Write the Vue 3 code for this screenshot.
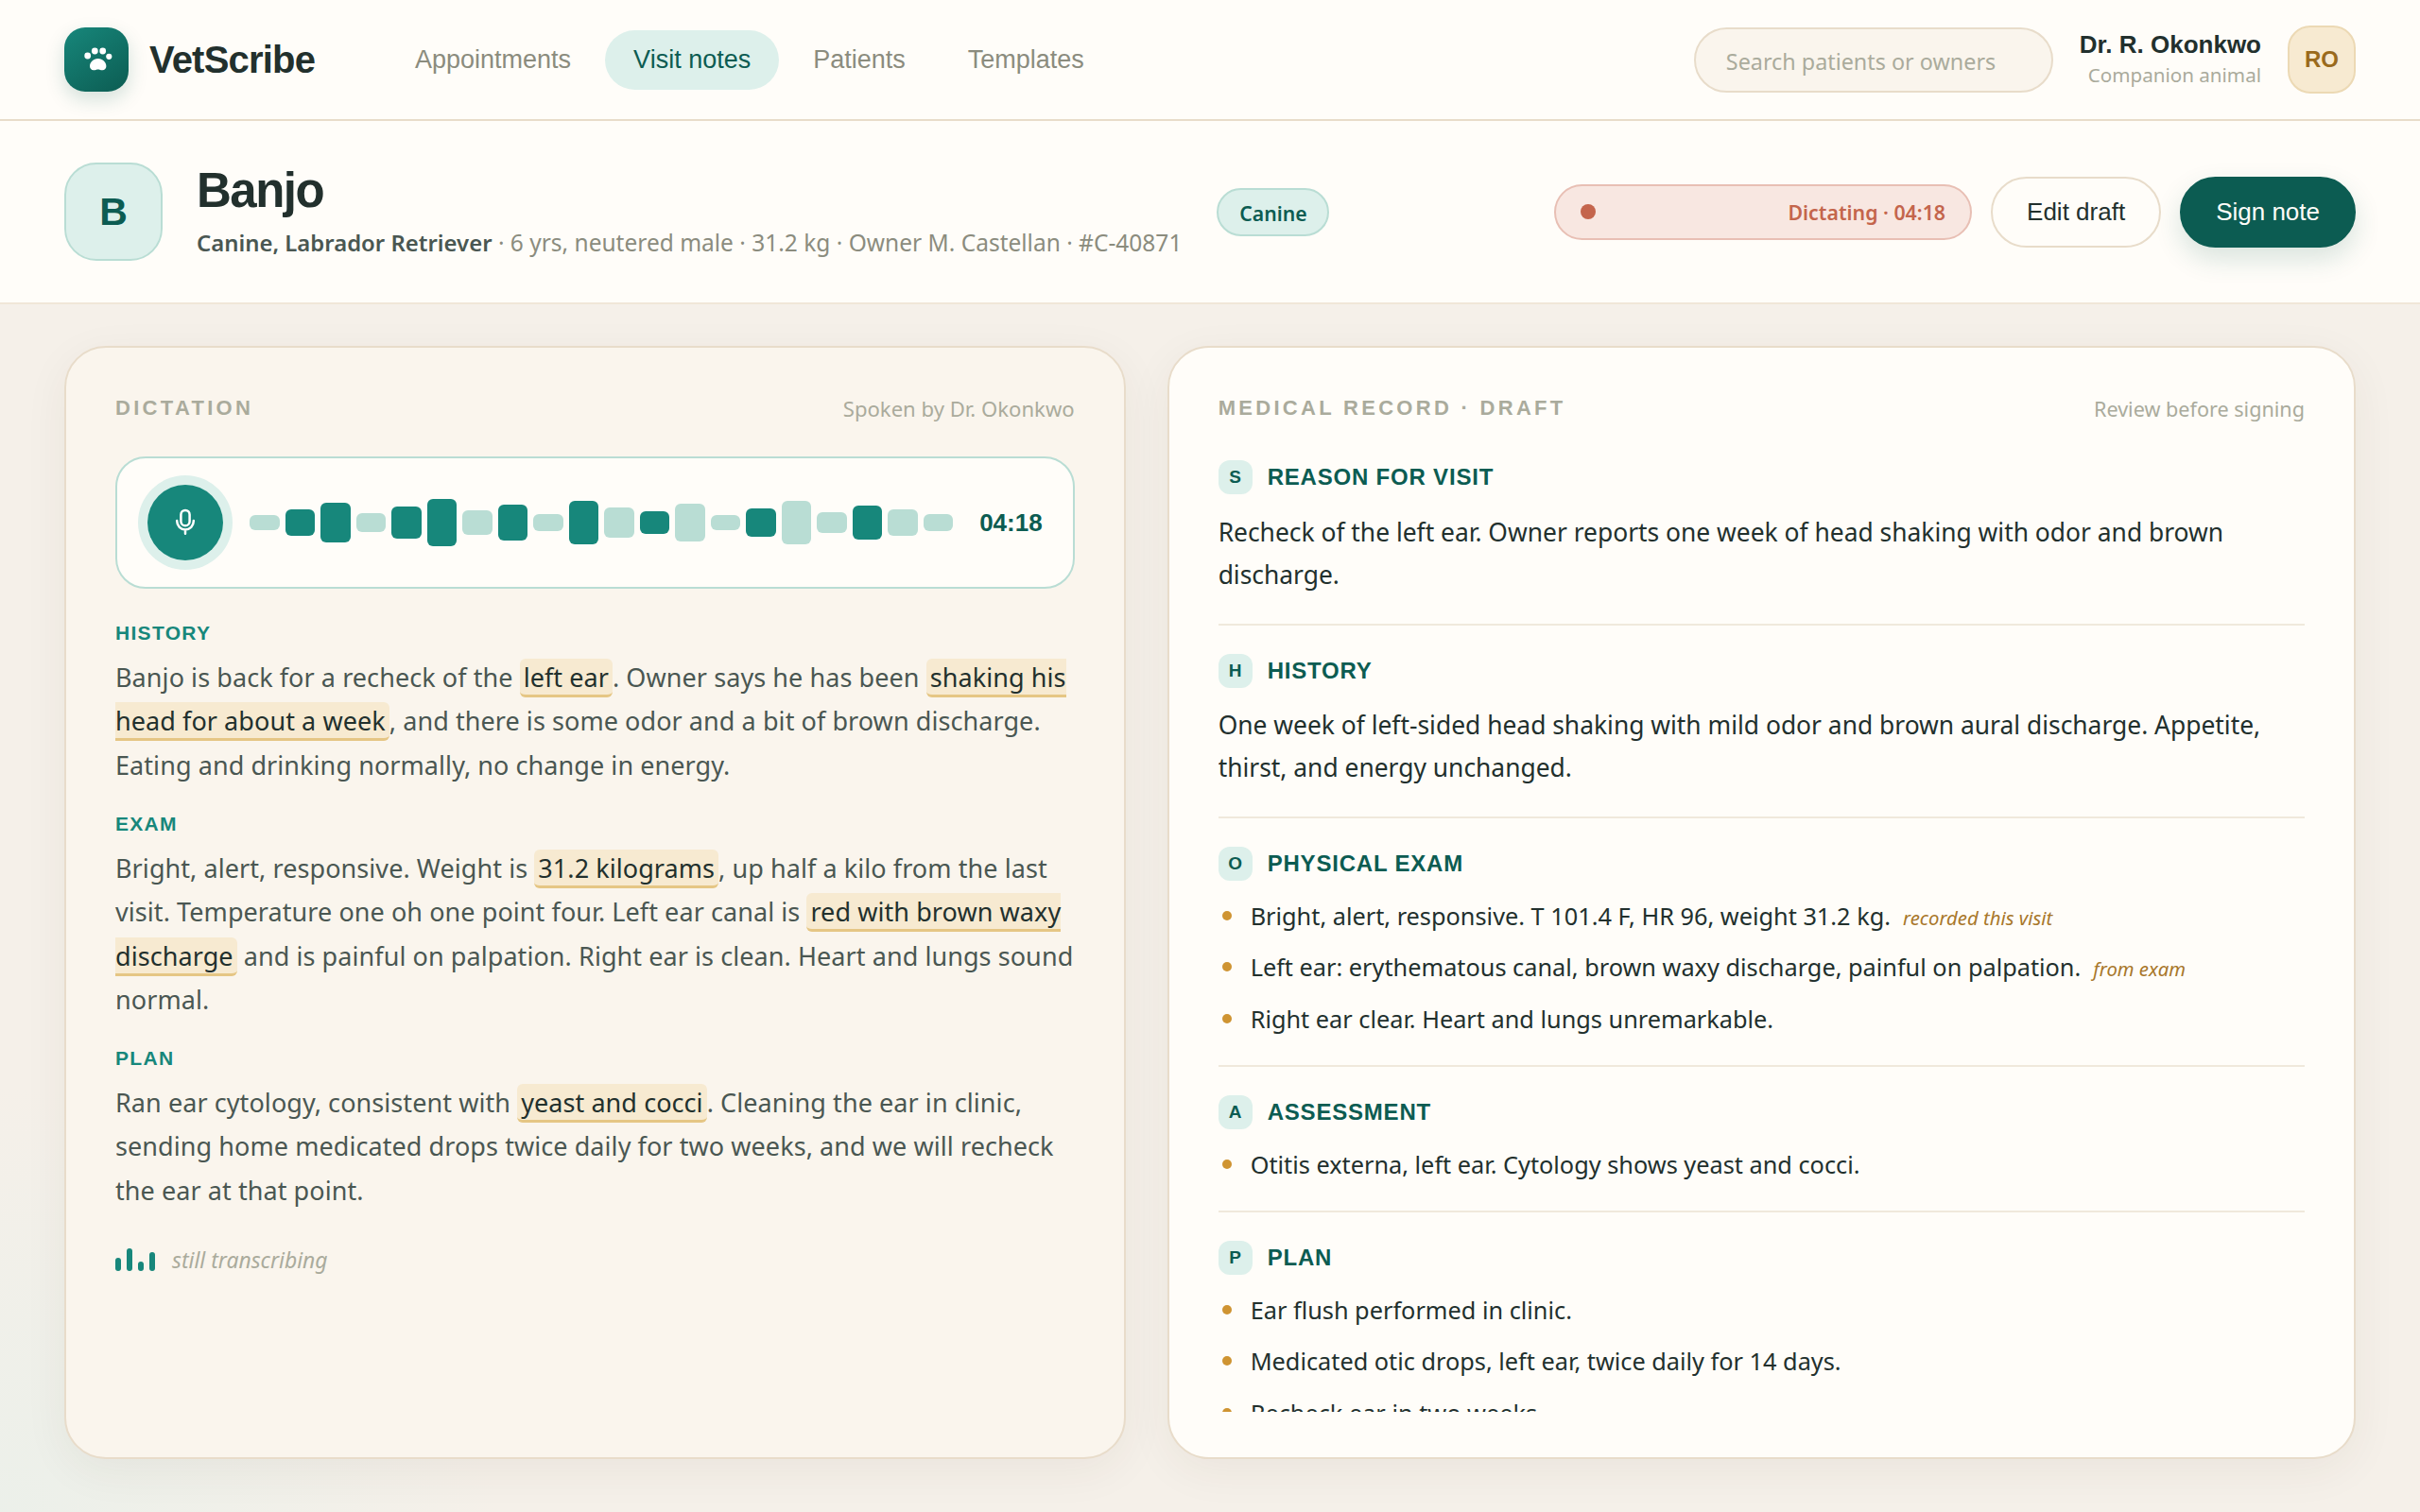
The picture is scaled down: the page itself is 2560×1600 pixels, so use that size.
<!-- App.vue: VetScribe visit note, dictation on the left and the drafted record on the right -->
<template>
  <div class="app">
    <header class="topbar">
      <div class="brand">
        <div class="logo">
          <svg width="34" height="34" viewBox="0 0 34 34" fill="#fff">
            <circle cx="7.7" cy="13" r="3.4" />
            <circle cx="15.3" cy="8" r="3.4" />
            <circle cx="23.7" cy="8" r="3.4" />
            <circle cx="30.3" cy="13.8" r="3.1" />
            <path d="M18.7 16c-4.9 0-8.7 3.8-8.7 8.1 0 2.7 1.7 4.2 4 4.2 1.9 0 3-.8 4.7-.8s2.8.8 4.7.8c2.3 0 4-1.5 4-4.2 0-4.3-3.8-8.1-8.7-8.1z" />
          </svg>
        </div>
        <span class="brand-name">VetScribe</span>
      </div>

      <nav class="nav">
        <a v-for="item in navItems" :key="item" class="nav-item" :class="{ active: item === activeNav }" @click="activeNav = item">{{ item }}</a>
      </nav>

      <div class="topbar-right">
        <input v-model="query" class="search" type="text" placeholder="Search patients or owners" />
        <div class="user">
          <div class="user-name">Dr. R. Okonkwo</div>
          <div class="user-role">Companion animal</div>
        </div>
        <div class="avatar">RO</div>
      </div>
    </header>

    <section class="patient">
      <div class="patient-mark">B</div>
      <div class="patient-info">
        <h1 class="patient-name">Banjo</h1>
        <p class="patient-meta"><strong>Canine, Labrador Retriever</strong> · 6 yrs, neutered male · 31.2 kg · Owner M. Castellan · #C-40871</p>
      </div>
      <span class="species">Canine</span>

      <div class="actions">
        <div class="status">
          <span class="status-dot"></span>
          <span class="status-text">Dictating · 04:18</span>
        </div>
        <button class="btn" type="button">Edit draft</button>
        <button class="btn primary" type="button">Sign note</button>
      </div>
    </section>

    <main class="panels">
      <section class="panel dictation">
        <div class="panel-head">
          <h2 class="panel-title">Dictation</h2>
          <span class="panel-sub spoken">Spoken by Dr. Okonkwo</span>
        </div>

        <div class="recorder">
          <div class="mic">
            <svg width="30" height="30" viewBox="0 0 30 30" fill="none" stroke="#fff" stroke-width="2.5" stroke-linecap="round">
              <rect x="10.4" y="1.9" width="9.2" height="16.4" rx="4.6" />
              <path d="M6.2 13v.6a8.8 8.8 0 0 0 17.6 0V13M15 22.4V26.8" />
            </svg>
          </div>
          <div class="wave">
            <span v-for="(bar, i) in bars" :key="i" class="wave-bar" :class="{ on: bar.on }" :style="{ height: bar.h + 'px' }"></span>
          </div>
          <span class="timer">04:18</span>
        </div>

        <div v-for="part in transcript" :key="part.label" class="part">
          <h3 class="part-label">{{ part.label }}</h3>
          <p class="part-text"><template v-for="(chunk, i) in part.chunks" :key="i"><mark v-if="chunk.hl" class="hl">{{ chunk.text }}</mark><template v-else>{{ chunk.text }}</template></template></p>
        </div>

        <div class="live">
          <span class="eq">
            <i v-for="(h, i) in eqBars" :key="i" :style="{ height: h + 'px' }"></i>
          </span>
          <span class="live-text">still transcribing</span>
        </div>
      </section>

      <section class="panel record">
        <div class="panel-head">
          <h2 class="panel-title">Medical record · Draft</h2>
          <span class="panel-sub">Review before signing</span>
        </div>

        <div class="record-body">
          <article v-for="s in sections" :key="s.key" class="section">
            <div class="section-head">
              <span class="badge">{{ s.key }}</span>
              <h3 class="section-title">{{ s.title }}</h3>
            </div>
            <p v-if="s.text" class="section-text">{{ s.text }}</p>
            <ul v-else class="section-list">
              <li v-for="item in s.items" :key="item.text">{{ item.text }}<em v-if="item.source" class="source">{{ item.source }}</em></li>
            </ul>
          </article>
        </div>
      </section>
    </main>
  </div>
</template>

<script setup>
import { ref } from 'vue';

const navItems = ['Appointments', 'Visit notes', 'Patients', 'Templates'];
const activeNav = ref('Visit notes');
const query = ref('');

const heights = [16, 28, 42, 20, 34, 50, 26, 38, 18, 46, 32, 24, 40, 16, 30, 46, 22, 36, 28, 18];
const voiced = [1, 2, 4, 5, 7, 9, 11, 14, 17];
const bars = heights.map((h, i) => ({ h, on: voiced.includes(i) }));
const eqBars = [14, 24, 10, 20];

const transcript = [
  {
    label: 'History',
    chunks: [
      { text: 'Banjo is back for a recheck of the ' },
      { text: 'left ear', hl: true },
      { text: '. Owner says he has been ' },
      { text: 'shaking his head for about a week', hl: true },
      { text: ', and there is some odor and a bit of brown discharge. Eating and drinking normally, no change in energy.' }
    ]
  },
  {
    label: 'Exam',
    chunks: [
      { text: 'Bright, alert, responsive. Weight is ' },
      { text: '31.2 kilograms', hl: true },
      { text: ', up half a kilo from the last visit. Temperature one oh one point four. Left ear canal is ' },
      { text: 'red with brown waxy discharge', hl: true },
      { text: ' and is painful on palpation. Right ear is clean. Heart and lungs sound normal.' }
    ]
  },
  {
    label: 'Plan',
    chunks: [
      { text: 'Ran ear cytology, consistent with ' },
      { text: 'yeast and cocci', hl: true },
      { text: '. Cleaning the ear in clinic, sending home medicated drops twice daily for two weeks, and we will recheck the ear at that point.' }
    ]
  }
];

const sections = [
  {
    key: 'S',
    title: 'Reason for visit',
    text: 'Recheck of the left ear. Owner reports one week of head shaking with odor and brown discharge.'
  },
  {
    key: 'H',
    title: 'History',
    text: 'One week of left-sided head shaking with mild odor and brown aural discharge. Appetite, thirst, and energy unchanged.'
  },
  {
    key: 'O',
    title: 'Physical exam',
    items: [
      { text: 'Bright, alert, responsive. T 101.4 F, HR 96, weight 31.2 kg.', source: 'recorded this visit' },
      { text: 'Left ear: erythematous canal, brown waxy discharge, painful on palpation.', source: 'from exam' },
      { text: 'Right ear clear. Heart and lungs unremarkable.' }
    ]
  },
  {
    key: 'A',
    title: 'Assessment',
    items: [{ text: 'Otitis externa, left ear. Cytology shows yeast and cocci.' }]
  },
  {
    key: 'P',
    title: 'Plan',
    items: [
      { text: 'Ear flush performed in clinic.' },
      { text: 'Medicated otic drops, left ear, twice daily for 14 days.' },
      { text: 'Recheck ear in two weeks.' }
    ]
  }
];
</script>

<style>
body {
  margin: 0;
  overflow: hidden;
}
</style>

<style scoped>
.app {
  height: 1600px;
  display: flex;
  flex-direction: column;
  box-sizing: border-box;
  font-family: 'Noto Sans', 'Segoe UI', sans-serif;
  color: #22302d;
  background:
    radial-gradient(700px 600px at 0% 100%, rgba(221, 240, 235, 0.38), rgba(221, 240, 235, 0) 75%),
    #f5f0e9;
}

.app *,
.app *::before { box-sizing: border-box; }

h1, h2, h3, p, ul { margin: 0; padding: 0; }

.brand-name,
.nav-item,
.user-name,
.avatar,
.patient-mark,
.patient-name,
.btn,
.panel-title,
.timer,
.part-label,
.badge,
.section-title { font-family: 'Liberation Sans', Arial, sans-serif; }

/* top bar */
.topbar {
  flex: none;
  height: 128px;
  padding: 0 68px;
  display: flex;
  align-items: center;
  background: #fffdf9;
  border-bottom: 2px solid #e8dcca;
}

.brand {
  display: flex;
  align-items: center;
  gap: 22px;
  width: 341px;
}

.logo {
  width: 68px;
  height: 68px;
  border-radius: 22px;
  display: flex;
  align-items: center;
  justify-content: center;
  background: linear-gradient(145deg, #17877b, #0c5c52);
  box-shadow: 0 8px 20px rgba(12, 92, 82, 0.18);
}

.brand-name {
  font-size: 40px;
  font-weight: 700;
  letter-spacing: -0.8px;
}

.nav { display: flex; gap: 6px; }

.nav-item {
  padding: 16px 30px;
  border-radius: 32px;
  font-size: 27px;
  line-height: 31px;
  color: #8b8c7e;
  cursor: pointer;
}
.nav-item.active { background: #ddf0eb; color: #0c5c52; }

.topbar-right {
  margin-left: auto;
  display: flex;
  align-items: center;
  gap: 28px;
}

.search {
  width: 380px;
  height: 69px;
  padding: 3px 32px 0;
  border: 2px solid #e8dcca;
  border-radius: 35px;
  background: #faf5ed;
  font-family: inherit;
  font-size: 23.35px;
  color: #22302d;
  outline: none;
}
.search::placeholder { color: #aaab9c; opacity: 1; }

.user { padding-top: 1px; text-align: right; }
.user-name { font-size: 26px; font-weight: 700; line-height: 32px; }
.user-role { font-size: 20.6px; line-height: 33px; color: #aaab9c; }

.avatar {
  width: 72px;
  height: 72px;
  border-radius: 24px;
  border: 2px solid #ecd9b4;
  background: #f7ead1;
  color: #9a6a1c;
  font-size: 24px;
  font-weight: 700;
  display: flex;
  align-items: center;
  justify-content: center;
}

/* patient header */
.patient {
  flex: none;
  height: 194px;
  padding: 0 68px;
  display: flex;
  align-items: center;
  background: #fffdf9;
  border-bottom: 2px solid #f0e7d8;
}

.patient-mark {
  width: 104px;
  height: 104px;
  margin-right: 36px;
  border-radius: 34px;
  border: 2px solid #b9ddd4;
  background: #ddf0eb;
  color: #0c5c52;
  font-size: 41px;
  font-weight: 700;
  display: flex;
  align-items: center;
  justify-content: center;
}

.patient-name {
  font-size: 51px;
  line-height: 58px;
  font-weight: 700;
  letter-spacing: -1.5px;
}

.patient-meta {
  margin-top: 7px;
  font-size: 24.5px;
  line-height: 38px;
  color: #8b8c7e;
  white-space: nowrap;
}
.patient-meta strong { font-size: 23.9px; font-weight: 600; color: #4a5752; }

.species {
  width: 119px;
  margin-left: 37px;
  height: 51px;
  line-height: 49px;
  text-align: center;
  border: 2px solid #b9ddd4;
  border-radius: 26px;
  background: #ddf0eb;
  color: #0c5c52;
  font-size: 21.2px;
  font-weight: 600;
}

.actions {
  margin-left: auto;
  display: flex;
  align-items: center;
  gap: 20px;
}

.status {
  width: 442px;
  height: 59px;
  padding: 0 26px;
  display: flex;
  align-items: center;
  justify-content: space-between;
  border: 2px solid #e8bfb4;
  border-radius: 30px;
  background: #f8e7e1;
  color: #c4654c;
}
.status-dot { width: 16px; height: 16px; border-radius: 50%; background: #c4654c; }
.status-text { font-size: 21.3px; font-weight: 600; }

.btn {
  height: 75px;
  padding: 0 36px;
  border: 2px solid #e8dcca;
  border-radius: 38px;
  background: #fffdf9;
  color: #22302d;
  font-size: 26px;
  cursor: pointer;
}
.btn.primary {
  border-color: #0c5c52;
  background: #0c5c52;
  color: #fffdf9;
  box-shadow: 0 12px 28px rgba(12, 92, 82, 0.16);
}

/* panels */
.panels {
  flex: 1;
  min-height: 0;
  padding: 44px 68px 56px;
  display: grid;
  grid-template-columns: 1fr 1.12fr;
  gap: 44px;
}

.panel {
  min-height: 0;
  padding: 48px 52px;
  display: flex;
  flex-direction: column;
  border: 2px solid #e8dcca;
  border-radius: 44px;
  box-shadow: 0 12px 48px rgba(70, 50, 30, 0.06);
}
.dictation { background: #faf5ed; }
.record { background: #fffdf9; }

.panel-head {
  flex: none;
  height: 32px;
  display: flex;
  align-items: center;
  justify-content: space-between;
}

.panel-title {
  font-size: 22px;
  line-height: 30px;
  letter-spacing: 3.3px;
  text-transform: uppercase;
  color: #aaab9c;
}

.panel-sub { font-size: 21.6px; color: #aaab9c; }
.panel-sub.spoken { font-size: 22.1px; }

.recorder {
  flex: none;
  height: 140px;
  margin-top: 35px;
  padding: 0 32px;
  display: flex;
  align-items: center;
  gap: 28px;
  border: 2px solid #b9ddd4;
  border-radius: 32px;
  background: #fffdf9;
}

.mic {
  width: 80px;
  height: 80px;
  border-radius: 50%;
  background: #17877b;
  box-shadow: 0 0 0 10px #ddf0eb;
  display: flex;
  align-items: center;
  justify-content: center;
}

.wave { flex: 1; display: flex; align-items: center; gap: 6px; }
.wave-bar { flex: 1; border-radius: 6px; background: #b9ddd4; }
.wave-bar.on { background: #17877b; }

.timer { font-size: 26px; font-weight: 700; color: #0c5c52; }

.part { margin-top: 26.6px; }
.recorder + .part { margin-top: 35px; }

.part-label {
  font-size: 21px;
  line-height: 24px;
  letter-spacing: 1.3px;
  text-transform: uppercase;
  color: #17877b;
}

.part-text {
  margin-top: 12px;
  font-size: 27px;
  line-height: 46.4px;
  letter-spacing: 0.07px;
  color: #4a5752;
}

.hl {
  padding: 1px 4px 0;
  border-bottom: 3px solid #e5c684;
  border-radius: 6px;
  background: #f7ead1;
  color: #22302d;
}

.live { margin-top: 34.5px; display: flex; align-items: center; gap: 18px; }
.eq { height: 24px; display: flex; align-items: flex-end; gap: 6px; }
.eq i { width: 6px; border-radius: 3px; background: #17877b; }
.live-text { font-size: 22.9px; font-style: italic; color: #aaab9c; }

.record-body { flex: 1; min-height: 0; margin-top: 9px; overflow: hidden; }

.section { padding: 30px 0 28px; border-bottom: 2px solid #f0e9dc; }
.section:last-child { border-bottom: none; }

.section-head { display: flex; align-items: center; gap: 16px; }

.badge {
  width: 36px;
  height: 36px;
  border-radius: 12px;
  background: #ddf0eb;
  color: #0c5c52;
  font-size: 19px;
  font-weight: 700;
  display: flex;
  align-items: center;
  justify-content: center;
}

.section-title {
  font-size: 24px;
  letter-spacing: 0.8px;
  text-transform: uppercase;
  color: #0c5c52;
}

.section-text {
  margin: 17.5px 0 1px;
  font-size: 26.4px;
  line-height: 45px;
}

.section-list {
  margin-top: 15.8px;
  list-style: none;
  display: flex;
  flex-direction: column;
  gap: 12px;
}

.section-list li {
  position: relative;
  padding-left: 34px;
  font-size: 25.3px;
  line-height: 42.4px;
}
.section-list li::before {
  content: '';
  position: absolute;
  left: 4px;
  top: 16px;
  width: 10px;
  height: 10px;
  border-radius: 50%;
  background: #cf9432;
}

.source { margin-left: 13px; font-size: 20.3px; line-height: 1; color: #a8772a; }
</style>
